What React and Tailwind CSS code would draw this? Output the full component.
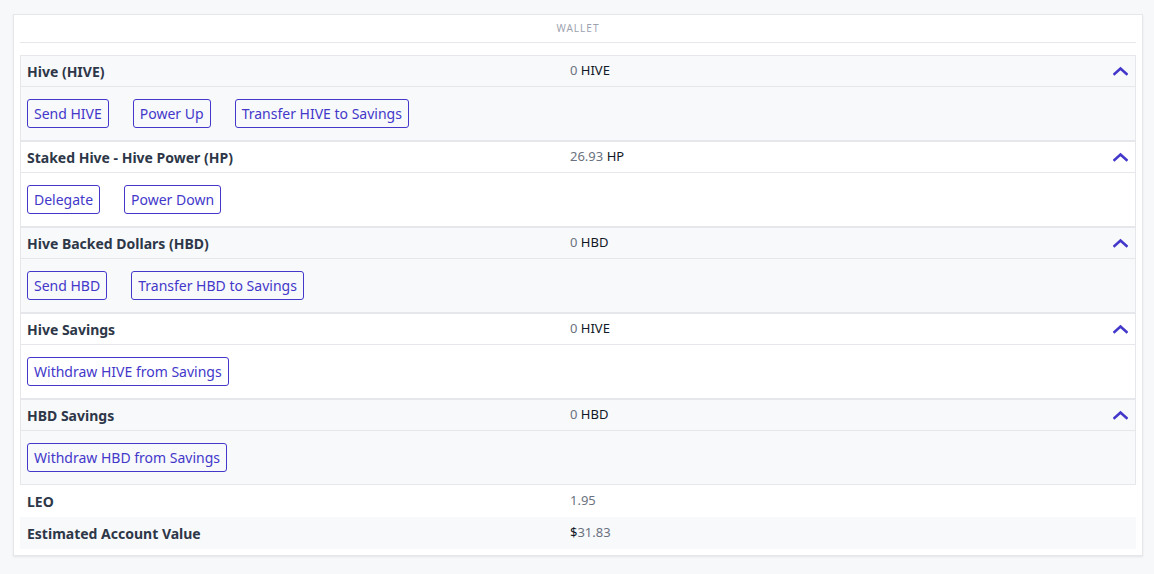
import React from 'react';

const sections = [
  {
    title: 'Hive (HIVE)',
    amount: '0',
    unit: 'HIVE',
    actions: ['Send HIVE', 'Power Up', 'Transfer HIVE to Savings'],
  },
  {
    title: 'Staked Hive - Hive Power (HP)',
    amount: '26.93',
    unit: 'HP',
    actions: ['Delegate', 'Power Down'],
  },
  {
    title: 'Hive Backed Dollars (HBD)',
    amount: '0',
    unit: 'HBD',
    actions: ['Send HBD', 'Transfer HBD to Savings'],
  },
  {
    title: 'Hive Savings',
    amount: '0',
    unit: 'HIVE',
    actions: ['Withdraw HIVE from Savings'],
  },
  {
    title: 'HBD Savings',
    amount: '0',
    unit: 'HBD',
    actions: ['Withdraw HBD from Savings'],
  },
];

function ChevronUp() {
  return (
    <svg width="15" height="10" viewBox="0 0 15 10" fill="none">
      <path d="M1.5 8 L7.5 2.5 L13.5 8" stroke="#4338ca" strokeWidth="2.6" strokeLinecap="square" />
    </svg>
  );
}

export default function App() {
  return (
    <div className="min-h-[574px] bg-[#f7f8fa] pl-[13px] pr-[11px] pt-[14px] text-[#374151]" style={{ fontFamily: '"Segoe UI", "Noto Sans", sans-serif' }}>
      <div className="bg-white border border-[#e5e7eb] shadow-[0_1px_2px_rgba(0,0,0,0.08)] px-[6px] pb-[6px]">
        <div className="h-[28px] border-b border-[#e5e7eb] flex items-center justify-center text-[10px] tracking-[0.1em] text-[#9ca3af]">
          WALLET
        </div>
        <div className="mt-[12px]">
          {sections.map((s, i) => (
            <div
              key={i}
              className={`border border-[#e5e7eb] ${i > 0 ? 'border-t-2 -mt-px' : ''} ${i % 2 === 0 ? 'bg-[#f8f9fb]' : 'bg-white'}`}
            >
              <div className="h-[31px] flex items-center border-b border-[#e5e7eb] pl-[6px] pr-[7px]">
                <div className="w-[543px] text-[14px] font-bold text-[#2d3748]">{s.title}</div>
                <div className="flex-1 text-[13px]">
                  <span className="text-[#6b7280]">{s.amount}</span>{' '}
                  <span className="text-[#111827]">{s.unit}</span>
                </div>
                <ChevronUp />
              </div>
              <div className="h-[53px] flex items-center gap-[24px] pl-[6px]">
                {s.actions.map((a) => (
                  <button
                    key={a}
                    className="h-[29px] px-[6px] border border-[#4338ca] rounded-[3px] text-[14px] text-[#4338ca] bg-transparent"
                  >
                    {a}
                  </button>
                ))}
              </div>
            </div>
          ))}
        </div>
        <div className="h-[32px] flex items-center pl-[7px]">
          <div className="w-[543px] text-[14px] font-bold text-[#2d3748]">LEO</div>
          <div className="text-[13px] text-[#6b7280]">1.95</div>
        </div>
        <div className="h-[32px] flex items-center pl-[7px] bg-[#f8f9fb]">
          <div className="w-[543px] text-[14px] font-bold text-[#2d3748]">Estimated Account Value</div>
          <div className="text-[13px] text-[#6b7280]">
            <span className="text-[#111827]">$</span>31.83
          </div>
        </div>
      </div>
    </div>
  );
}
